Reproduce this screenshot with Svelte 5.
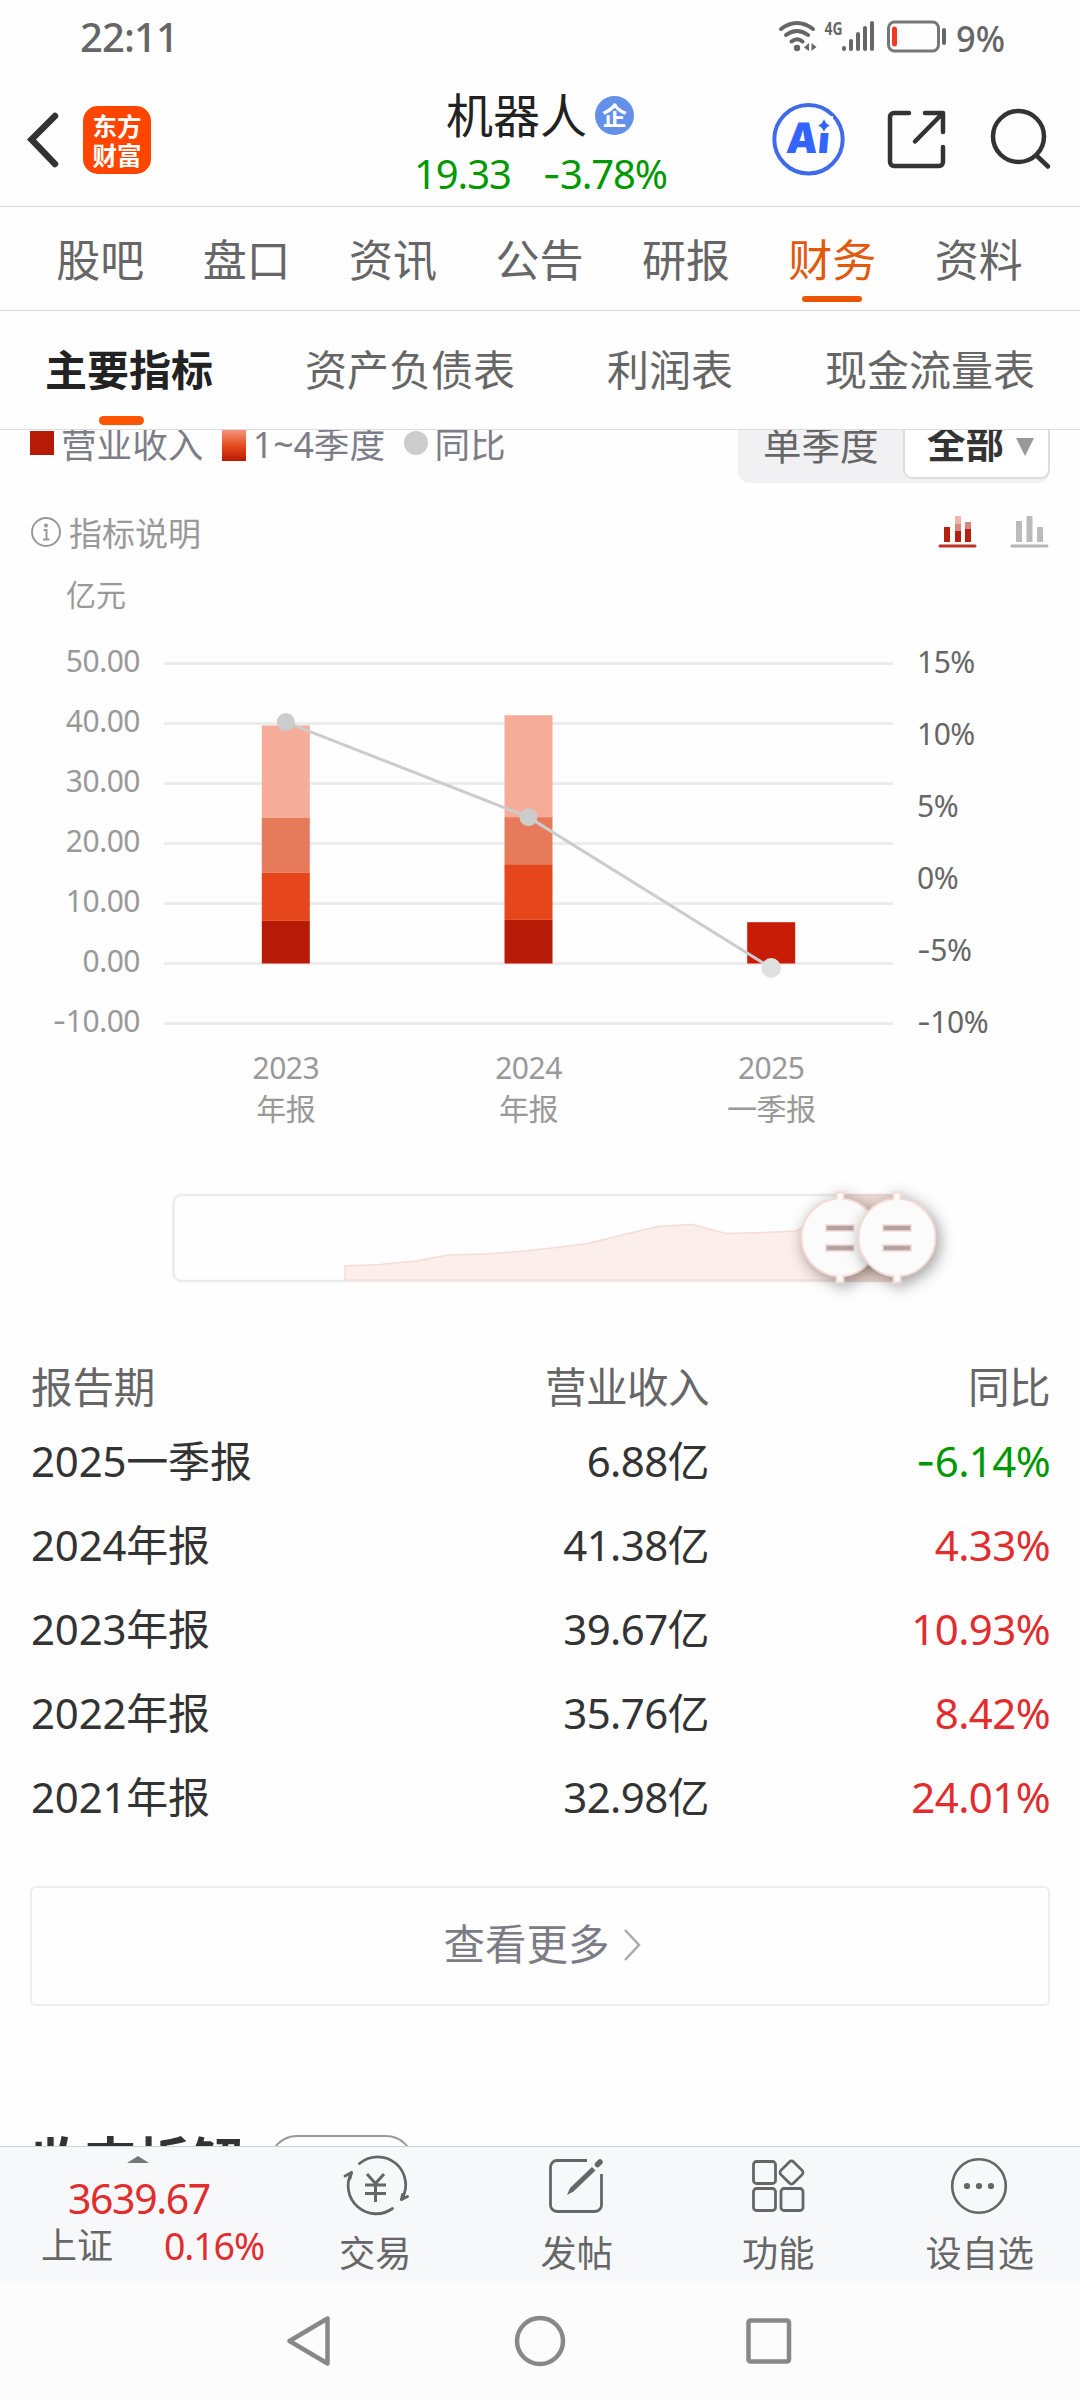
<script>
	const tabs = ["股吧", "盘口", "资讯", "公告", "研报", "财务", "资料"];
	const subTabs = ["主要指标", "资产负债表", "利润表", "现金流量表"];
	let activeTab = "财务";
	let activeSub = "主要指标";

	const colors = ["#b71a07", "#e6461b", "#e67b5b", "#f5ac98"];
	const chartData = [
		{ year: "2023", label: "年报", quarters: [7.1, 8, 9.15, 15.42], yoy: 10.93 },
		{ year: "2024", label: "年报", quarters: [7.27, 9.28, 7.85, 16.98], yoy: 4.33 },
		{ year: "2025", label: "一季报", quarters: [6.88], yoy: -6.14 }
	];
	const leftTicks = [50, 40, 30, 20, 10, 0, -10];
	const rightTicks = [15, 10, 5, 0, -5, -10];

	const rows = [
		{ period: "2025一季报", income: "6.88亿", yoy: -6.14 },
		{ period: "2024年报", income: "41.38亿", yoy: 4.33 },
		{ period: "2023年报", income: "39.67亿", yoy: 10.93 },
		{ period: "2022年报", income: "35.76亿", yoy: 8.42 },
		{ period: "2021年报", income: "32.98亿", yoy: 24.01 }
	];

	// plot area inside the chart svg
	const top = 43.5;
	const plotHeight = 360;
	const barWidth = 48;

	const xPos = (i) => 285.8 + i * 242.7;
	const yScale = (value) => top + ((50 - value) / 60) * plotHeight;
	const yScaleRight = (value) => top + ((15 - value) / 25) * plotHeight;

	function stack(d) {
		let sum = 0;
		return d.quarters.map((q, i) => {
			sum += q;
			return { y: yScale(sum), height: (q / 60) * plotHeight, fill: d.quarters.length == 1 ? "#c81c07" : colors[i] };
		});
	}

	$: linePoints = chartData.map((d, i) => `${xPos(i)},${yScaleRight(d.yoy)}`).join(" ");
</script>

<div class="screen">
	<div class="status">
		<span class="time">22:11</span>
		<svg width="236" height="72" viewBox="775 0 236 72">
			<g fill="none" stroke="#666" stroke-width="4" stroke-linecap="round">
				<path d="M781 29Q797 17 813 29" />
				<path d="M786 35Q797 27 808 35" />
				<path d="M791.500 41.500Q797 37 802.500 41.500" />
			</g>
			<circle cx="797" cy="48" r="3.200" fill="#666" />
			<path d="M809 43v8l-5-3.500zM811.500 43v8l5-4z" fill="#666" />
			<text x="824.500" y="34.500" font-size="18" font-weight="700" fill="#666" textLength="18" lengthAdjust="spacingAndGlyphs">4G</text>
			<g stroke="#666" stroke-width="4" stroke-linecap="round">
				<path d="M844 48v1M851 41v8M858 34v15M865 28v21M872 23v26" />
			</g>
			<rect x="888.500" y="22" width="50" height="29" rx="6" fill="none" stroke="#777" stroke-width="3" />
			<rect x="892" y="26.500" width="5" height="20" rx="2.500" fill="#f33b24" />
			<rect x="942" y="28" width="4" height="17" rx="2" fill="#666" />
			<text x="956" y="51.500" font-size="37" font-weight="500" fill="#666" textLength="49" lengthAdjust="spacingAndGlyphs">9%</text>
		</svg>
	</div>

	<header>
		<div class="side">
			<svg width="34" height="60" viewBox="0 0 34 60">
				<path d="M29 6L5.500 29.500L29 54" fill="none" stroke="#333" stroke-width="6.500" stroke-linecap="round" />
			</svg>
			<div class="logo"><span>东方</span><span>财富</span></div>
		</div>
		<div class="stock">
			<div class="name">机器人<span class="badge">企</span></div>
			<div class="price"><span>19.33</span><span><i>-</i>3.78%</span></div>
		</div>
		<div class="actions">
			<svg width="288" height="76" viewBox="768 101 288 76">
				<circle cx="808.500" cy="139.300" r="34.200" fill="none" stroke="#3f6aea" stroke-width="4" />
				<text class="ai" x="799" y="153" transform="skewX(-5)" textLength="43" lengthAdjust="spacingAndGlyphs">Ai</text>
				<rect x="815" y="116" width="18" height="17" fill="#fff" />
				<path d="M824 119Q825.500 124 830 125.500Q825.500 127 824 132Q822.500 127 818 125.500Q822.500 124 824 119z" fill="#3464ff" />
				<g fill="none" stroke="#333" stroke-width="4.500" stroke-linecap="round" stroke-linejoin="round">
					<path d="M909 113h-15a4 4 0 0 0-4 4v45a4 4 0 0 0 4 4h45a4 4 0 0 0 4-4v-15" />
					<path d="M925 113h18v19M942 114L915 141.500" />
					<circle cx="1018.500" cy="136.500" r="25.500" />
					<path d="M1037 156l11 10.500" />
				</g>
			</svg>
		</div>
	</header>

	<nav class="tabs">
		{#each tabs as tab}
		<div class="tab" class:active={tab == activeTab}>{tab}</div>
		{/each}
	</nav>

	<nav class="subtabs">
		{#each subTabs as tab}
		<div class="subtab" class:active={tab == activeSub}>{tab}</div>
		{/each}
	</nav>

	<main>
		<div class="controls">
			<ul class="legend">
				<li><div class="key solid"></div>营业收入</li>
				<li><div class="key gradient"></div>1~4季度</li>
				<li><div class="key dot"></div>同比</li>
			</ul>
			<div class="segment">
				<div class="option">单季度</div>
				<div class="option selected">全部<div class="caret"></div></div>
			</div>
		</div>

		<div class="explain">
			<svg width="32" height="32" viewBox="0 0 32 32">
				<circle cx="16" cy="16" r="14" fill="none" stroke="#999" stroke-width="2" />
				<circle cx="16" cy="9.500" r="2" fill="#999" />
				<path d="M13.500 14h3v9M13 23.500h6.500" fill="none" stroke="#999" stroke-width="2" />
			</svg>
			<span>指标说明</span>
			<svg width="112" height="34" viewBox="0 0 112 34">
				<path d="M2 31h35" stroke="#b93326" stroke-width="3" stroke-linecap="round" />
				<path d="M6 12h6v15H6zM17 16h6v11h-6zM27 14h6v13h-6z" fill="#b5200f" />
				<path d="M17 9h6v7h-6zM27 7h6v7h-6z" fill="#d9897f" />
				<path d="M17 1h6v8h-6z" fill="#ebb8b0" />
				<path d="M74 31h35" stroke="#b5b5b5" stroke-width="3" stroke-linecap="round" />
				<path d="M78 6h6v21h-6zM88.500 1h6v26h-6zM99 12h6v15h-6z" fill="#bbb" />
			</svg>
		</div>
		<div class="unit">亿元</div>

		<svg class="chart" width="1080" height="520" viewBox="0 0 1080 520">
			{#each leftTicks as tick}
			<line x1="164" x2="893" y1={yScale(tick)} y2={yScale(tick)} stroke="#ececec" stroke-width="3" />
			<text x="140" y={yScale(tick) + 8.8} text-anchor="end" fill="#999">{#if tick < 0}<tspan class="sign">-</tspan>{/if}{Math.abs(tick).toFixed(2)}</text>
			{/each}
			{#each rightTicks as tick}
			<text x="917" y={yScaleRight(tick) + 9} fill="#666">{#if tick < 0}<tspan class="sign">-</tspan>{/if}{Math.abs(tick)}%</text>
			{/each}
			{#each chartData as d, i}
			{#each stack(d) as q}
			<rect x={xPos(i) - barWidth / 2} y={q.y} width={barWidth} height={q.height} fill={q.fill} />
			{/each}
			<text x={xPos(i)} y="458.500" text-anchor="middle" fill="#999">{d.year}</text>
			<text x={xPos(i)} y="499.500" text-anchor="middle" fill="#999">{d.label}</text>
			{/each}
			<polyline points={linePoints} fill="none" stroke="#ccc" stroke-width="3" />
			{#each chartData as d, i}
			<circle cx={xPos(i)} cy={yScaleRight(d.yoy)} r={i == 2 ? 9.8 : 9} fill={i == 2 ? "#dfdfdf" : "#ccc"} />
			{/each}
		</svg>

		<svg class="range" width="1080" height="200" viewBox="0 1140 1080 200">
			<rect x="173.500" y="1195" width="723" height="86" rx="8" fill="none" stroke="#ececec" stroke-width="2.500" />
			<path d="M345 1280V1266L379 1264.500L416 1261L448 1255L485 1254L519 1251.500L552 1248L588 1243.500L622 1235L658 1226.500L692 1224.500L726 1233.500L764 1232.500L796 1231L815 1222L897 1222V1280z" fill="#fceeeb" stroke="#f6dcd6" stroke-width="1.500" />
			<rect x="840" y="1194" width="57" height="88" fill="#ecd3cc" opacity="0.8" />
			{#each [840, 897] as cx}
			<g class="handle" transform="translate({cx} 1237.5)">
				<path d="M-3.500-45h7v6.200a39 39 0 0 1 0 77.600v6.200h-7v-6.200a39 39 0 0 1 0-77.600z" fill="#fbfbfb" stroke="#f6d9d2" stroke-width="2" />
			</g>
			<path d="M{cx - 14} 1225h28v6h-28zM{cx - 14} 1245h28v6h-28z" fill="#b3a3a1" stroke="#f3d9d3" stroke-width="1.500" />
			{/each}
		</svg>

		<div class="table">
			<div class="row head"><span>报告期</span><span>营业收入</span><span>同比</span></div>
			{#each rows as row}
			<div class="row">
				<span>{row.period}</span>
				<span>{row.income}</span>
				<span class={row.yoy < 0 ? "down" : "up"}>{#if row.yoy < 0}<i>-</i>{/if}{Math.abs(row.yoy).toFixed(2)}%</span>
			</div>
			{/each}
		</div>

		<div class="more">
			查看更多
			<svg width="20" height="34" viewBox="0 0 20 34"><path d="M2 2l14 15L2 32" fill="none" stroke="#aaa" stroke-width="2.500" /></svg>
		</div>

		<div class="next">
			<h2>收支拆解</h2>
			<div class="pill"></div>
		</div>
	</main>

	<footer>
		<div class="index">
			<div class="up-arrow"></div>
			<div class="points">3639.67</div>
			<div class="change"><span>上证</span><span class="up">0.16%</span></div>
		</div>
		<div class="item">
			<svg width="68" height="62" viewBox="341 2155 68 62">
				<g fill="none" stroke="#666" stroke-width="2.800" stroke-linecap="round" stroke-linejoin="round">
					<path d="M359.500 2163.500a28 28 0 0 1 42 36l6-3" />
					<path d="M401.500 2199.500l1-5" />
					<path d="M392.500 2208.500a28 28 0 0 1-41-36l-6.500 3.500" />
					<path d="M351.500 2172.500l-1.500 6" />
				</g>
				<path d="M367 2174l8.500 9.500L384 2174M375.500 2183v19M365 2185h21M365 2193.500h21" fill="none" stroke="#666" stroke-width="3" />
			</svg>
			<span>交易</span>
		</div>
		<div class="item">
			<svg width="68" height="62" viewBox="543 2155 68 62">
				<path d="M588 2160.500h-30a6.500 6.500 0 0 0-6.500 6.500v38a6.500 6.500 0 0 0 6.500 6.500h38a6.500 6.500 0 0 0 6.500-6.500v-31" fill="none" stroke="#666" stroke-width="2.800" />
				<path d="M568 2195l3-7 22-21 3.500 3.500-22 21z" fill="#666" />
				<path d="M598.500 2164.500l2.500-2.500" stroke="#666" stroke-width="5.500" stroke-linecap="round" />
			</svg>
			<span>发帖</span>
		</div>
		<div class="item">
			<svg width="68" height="62" viewBox="744 2155 68 62">
				<g fill="none" stroke="#666" stroke-width="2.800">
					<rect x="753.500" y="2161.500" width="22" height="22" rx="3" />
					<rect x="753.500" y="2188.500" width="22" height="22" rx="3" />
					<rect x="781" y="2188.500" width="22" height="22" rx="3" />
					<rect x="782.500" y="2163.500" width="18" height="18" rx="3" transform="rotate(45 791.5 2172.5)" />
				</g>
			</svg>
			<span>功能</span>
		</div>
		<div class="item">
			<svg width="68" height="62" viewBox="945 2155 68 62">
				<circle cx="979" cy="2186" r="26.800" fill="none" stroke="#666" stroke-width="2.600" />
				<circle cx="967" cy="2186" r="3.100" fill="#666" />
				<circle cx="979" cy="2186" r="3.100" fill="#666" />
				<circle cx="991" cy="2186" r="3.100" fill="#666" />
			</svg>
			<span>设自选</span>
		</div>
	</footer>

	<div class="system">
		<svg width="1080" height="118" viewBox="0 2282 1080 118" fill="none" stroke="#888" stroke-width="4.500" stroke-linejoin="round">
			<path d="M327.500 2318.500v45L289.500 2341z" />
			<circle cx="540" cy="2341" r="23" />
			<rect x="748.500" y="2320.500" width="40.500" height="41" rx="2" />
		</svg>
	</div>
</div>

<style>
	:global(body) {
		margin: 0;
		background: #fff;
	}
	.screen {
		width: 1080px;
		height: 2400px;
		display: flex;
		flex-direction: column;
		background: #fefefe;
		color: #666;
		font-family: "Noto Sans", "Noto Sans CJK SC", sans-serif;
		overflow: hidden;
	}
	.screen * {
		box-sizing: border-box;
	}
	svg {
		display: block;
		flex: none;
	}
	i, .sign {
		font-family: Inter, sans-serif;
		font-style: normal;
	}
	.status {
		height: 72px;
		flex: none;
		display: flex;
		justify-content: space-between;
		padding: 0 69px 0 80px;
	}
	.time {
		font-size: 40px;
		font-weight: 500;
		line-height: 74px;
		letter-spacing: -0.9px;
	}
	header {
		height: 135px;
		flex: none;
		display: grid;
		grid-template-columns: 1fr auto 1fr;
		border-bottom: 1px solid #d8d8d8;
	}
	.side {
		display: flex;
		align-items: center;
		gap: 23px;
		padding: 1px 0 0 26px;
	}
	.logo {
		width: 68px;
		height: 68px;
		border-radius: 15px;
		background: #ff4500;
		color: #fff;
		display: flex;
		flex-direction: column;
		align-items: center;
		justify-content: center;
		font-family: "Noto Sans CJK SC", sans-serif;
		font-size: 24.5px;
		font-weight: 700;
		line-height: 29px;
	}
	.stock {
		width: 256px;
		padding-top: 14px;
	}
	.name {
		display: flex;
		align-items: center;
		justify-content: center;
		gap: 8px;
		font-size: 47px;
		line-height: 59px;
		color: #222;
	}
	.badge {
		width: 39px;
		height: 39px;
		border-radius: 50%;
		background: #6490ea;
		color: #fff;
		font-size: 25px;
		font-weight: 700;
		line-height: 38px;
		text-align: center;
	}
	.price {
		display: flex;
		justify-content: space-between;
		padding: 0 1px 0 2px;
		font-size: 40px;
		line-height: 58px;
		letter-spacing: -1.1px;
		color: #090;
	}
	.actions {
		display: flex;
		justify-content: flex-end;
		align-items: center;
		padding-right: 24px;
	}
	.ai {
		font-family: Inter, sans-serif;
		font-size: 42px;
		font-weight: 900;
		fill: #3464ff;
	}
	.tabs {
		height: 104px;
		flex: none;
		display: flex;
		padding: 0 28px 0 27px;
		border-bottom: 1px solid #d8d8d8;
	}
	.tab {
		position: relative;
		flex: 1;
		text-align: center;
		font-size: 44px;
		line-height: 106px;
	}
	.tab.active {
		color: #e2590e;
	}
	.tab.active::after {
		content: "";
		position: absolute;
		left: calc(50% - 30px);
		bottom: 8px;
		width: 60px;
		height: 6px;
		border-radius: 3px;
		background: #ea5504;
	}
	.subtabs {
		height: 119px;
		flex: none;
		display: flex;
		gap: 92px;
		padding-left: 45px;
		border-bottom: 1px solid #ddd;
	}
	.subtab {
		position: relative;
		flex: none;
		font-size: 42px;
		line-height: 117px;
	}
	.subtab.active {
		font-weight: 700;
		color: #222;
	}
	.subtab.active::after {
		content: "";
		position: absolute;
		left: calc(50% - 30px);
		bottom: 4px;
		width: 45px;
		height: 9px;
		border-radius: 5px;
		background: #ff5500;
	}
	main {
		height: 1716px;
		flex: none;
		overflow: hidden;
	}
	.controls {
		display: flex;
		justify-content: space-between;
		align-items: flex-start;
		height: 75px;
		margin-top: -22px;
		padding: 0 30px;
	}
	ul.legend {
		list-style-type: none;
		display: flex;
		gap: 18.5px;
		margin: 0;
		padding: 12.5px 0 0 0;
		font-size: 35.6px;
		line-height: 47px;
		color: #7d7d88;
	}
	ul.legend > li {
		display: flex;
		align-items: center;
	}
	.key {
		width: 24px;
		height: 24px;
		margin: -3px 7px 0 0;
	}
	.solid {
		background: #b71a07;
	}
	.gradient {
		height: 36px;
		margin-top: -2px;
		background: linear-gradient(#f5ac98, #e6461b 60%, #b71a07);
	}
	.dot {
		border-radius: 50%;
		background: #ccc;
	}
	.segment {
		display: flex;
		width: 312px;
		height: 75px;
		border-radius: 12px;
		background: #f1f1f4;
		font-size: 38.5px;
		line-height: 75px;
	}
	.option {
		width: 165px;
		padding-left: 25px;
	}
	.option.selected {
		display: flex;
		align-items: center;
		width: 147px;
		height: 71px;
		border: 2px solid #ddd;
		border-radius: 9px;
		background: #fff;
		font-weight: 700;
		color: #333;
		padding-left: 22px;
	}
	.caret {
		margin: 6px 0 0 12px;
		border: 9px solid transparent;
		border-top: 18px solid #999;
		border-bottom: none;
	}
	.explain {
		display: flex;
		align-items: center;
		height: 68px;
		margin-top: 15px;
		padding: 0 30px;
		font-size: 33px;
		line-height: 68px;
		color: #999;
	}
	.explain span {
		flex: 1;
		padding: 3px 0 0 7px;
	}
	.unit {
		height: 54px;
		padding-left: 66px;
		font-size: 30px;
		line-height: 57px;
		color: #999;
	}
	.chart {
		font-size: 30px;
		letter-spacing: -0.5px;
	}
	.range {
		overflow: visible;
	}
	.handle {
		filter: drop-shadow(3px 4px 8px rgba(0, 0, 0, 0.4));
	}
	.table {
		padding: 6px 30px 0 31px;
	}
	.row {
		display: grid;
		grid-template-columns: 338px 340px 341px;
		height: 84px;
		font-size: 42px;
		line-height: 83px;
		color: #333;
	}
	.row > span + span {
		text-align: right;
		letter-spacing: -0.6px;
	}
	.row > span:first-child {
		letter-spacing: -0.2px;
	}
	.row.head {
		height: 73px;
		font-size: 41.6px;
		color: #666;
	}
	.up {
		color: #e12d2d;
	}
	.row .down {
		color: #090;
	}
	.more {
		display: flex;
		align-items: center;
		justify-content: center;
		gap: 13px;
		height: 120px;
		margin: 47px 30px 0 30px;
		padding: 0 0 5px 6px;
		border: 2px solid #eee;
		border-radius: 6px;
		font-size: 41.5px;
		line-height: 60px;
		color: #7c7c86;
	}
	.more svg {
		margin-top: 3px;
	}
	.next {
		display: flex;
		align-items: flex-start;
		gap: 26px;
		padding: 129px 0 0 31px;
	}
	h2 {
		margin: -2px 0 0 0;
		font-size: 53px;
		font-weight: 700;
		line-height: 58px;
		color: #333;
	}
	.pill {
		width: 145px;
		height: 56px;
		border: 2px solid #999;
		border-radius: 28px;
	}
	footer {
		height: 136px;
		flex: none;
		display: flex;
		background: #f7f8fa;
		border-top: 1px solid #d0d3d6;
	}
	.index {
		width: 274px;
		padding-top: 9px;
	}
	.up-arrow {
		width: 0;
		margin-left: 127px;
		border: 11px solid transparent;
		border-bottom: 7px solid #777;
		border-top: none;
	}
	.points {
		padding-left: 68px;
		font-size: 41px;
		line-height: 50px;
		margin-top: 10px;
		letter-spacing: -1.4px;
		color: #e12d2d;
	}
	.change {
		display: flex;
		justify-content: space-between;
		padding: 0 10px 0 41px;
		font-size: 36px;
		line-height: 46px;
	}
	.change .up {
		font-size: 37.5px;
		letter-spacing: -1.1px;
	}
	.item {
		flex: 1;
		display: flex;
		flex-direction: column;
		align-items: center;
		padding-top: 8px;
		font-size: 36.2px;
		line-height: 50px;
	}
	.item span {
		margin-top: 11px;
		padding-left: 1px;
	}
	.system {
		flex: 1;
		background: #fcfcfc;
	}
</style>
